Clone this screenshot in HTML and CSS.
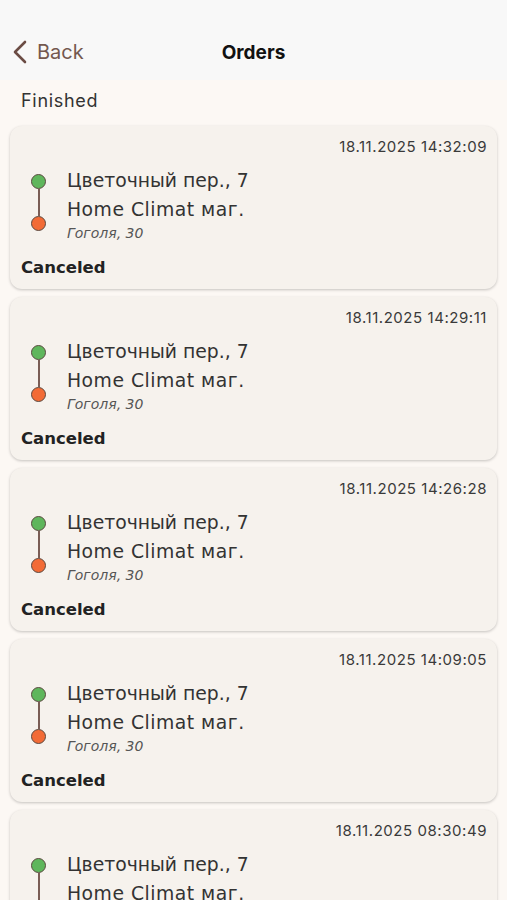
FILE: index.html
```html
<!DOCTYPE html>
<html>
<head lang="ru">
    <meta charset="UTF-8">
    <title>Orders</title>
    <link rel="stylesheet" href="styles.css">
</head>
<body>
<div class="topbar">
    <div class="back">
        <svg class="chev" width="16" height="24" viewBox="0 0 16 24"><path d="M13 2 L3 12 L13 22" fill="none" stroke="#6b4c44" stroke-width="2.6" stroke-linecap="round" stroke-linejoin="round"/></svg>
        <span>Back</span>
    </div>
    <div class="title">Orders</div>
</div>
<div class="page">
    <div class="section">Finished</div>
    <div class="list">
        <div class="card">
            <div class="time">18.11.2025 14:32:09</div>
            <div class="route">
                <div class="marks"><i class="dot from"></i><i class="stem"></i><i class="dot to"></i></div>
                <div class="addr">
                    <div class="line">Цветочный пер., 7</div>
                    <div class="line second">Home Climat маг.</div>
                    <div class="sub">Гоголя, 30</div>
                </div>
            </div>
            <div class="status">Canceled</div>
        </div>
        <div class="card">
            <div class="time">18.11.2025 14:29:11</div>
            <div class="route">
                <div class="marks"><i class="dot from"></i><i class="stem"></i><i class="dot to"></i></div>
                <div class="addr">
                    <div class="line">Цветочный пер., 7</div>
                    <div class="line second">Home Climat маг.</div>
                    <div class="sub">Гоголя, 30</div>
                </div>
            </div>
            <div class="status">Canceled</div>
        </div>
        <div class="card">
            <div class="time">18.11.2025 14:26:28</div>
            <div class="route">
                <div class="marks"><i class="dot from"></i><i class="stem"></i><i class="dot to"></i></div>
                <div class="addr">
                    <div class="line">Цветочный пер., 7</div>
                    <div class="line second">Home Climat маг.</div>
                    <div class="sub">Гоголя, 30</div>
                </div>
            </div>
            <div class="status">Canceled</div>
        </div>
        <div class="card">
            <div class="time">18.11.2025 14:09:05</div>
            <div class="route">
                <div class="marks"><i class="dot from"></i><i class="stem"></i><i class="dot to"></i></div>
                <div class="addr">
                    <div class="line">Цветочный пер., 7</div>
                    <div class="line second">Home Climat маг.</div>
                    <div class="sub">Гоголя, 30</div>
                </div>
            </div>
            <div class="status">Canceled</div>
        </div>
        <div class="card">
            <div class="time">18.11.2025 08:30:49</div>
            <div class="route">
                <div class="marks"><i class="dot from"></i><i class="stem"></i><i class="dot to"></i></div>
                <div class="addr">
                    <div class="line">Цветочный пер., 7</div>
                    <div class="line second">Home Climat маг.</div>
                    <div class="sub">Гоголя, 30</div>
                </div>
            </div>
            <div class="status">Canceled</div>
        </div>
    </div>
</div>
</body>
</html>
```

FILE: styles.css
```css
*{
    margin: 0;
    padding: 0;
    box-sizing: border-box;
}
html,body{
    height: 100%;
    overflow: hidden;
}
body{
    background: #fcf8f4;
    font-family: "Liberation Sans", Arial, sans-serif;
    color: #1d1d1d;
}
.topbar{
    height: 80px;
    background: #f8f8f8;
    display: grid;
    grid-template-columns: 1fr auto 1fr;
    align-items: center;
    padding: 24px 12px 0;
}
.back{
    display: flex;
    align-items: center;
    gap: 9px;
    color: #6b4c44;
    font-size: 20px;
}
.back span{
    font-family: Inter, "Noto Sans", sans-serif;
    color: #74584f;
}
.title{
    font-family: Inter, "Noto Sans", sans-serif;
    font-weight: 700;
    font-size: 19px;
    color: #111;
}
.section{
    font-family: Inter, "Noto Sans", sans-serif;
    font-size: 18px;
    letter-spacing: 0.7px;
    line-height: 22px;
    color: #333;
    padding: 10px 21px 0;
}
.list{
    display: flex;
    flex-direction: column;
    gap: 8px;
    padding: 14px 10px 0;
}
.card{
    height: 163px;
    background: #f6f2ed;
    border-radius: 12px;
    box-shadow: 0 1px 3px rgba(0,0,0,0.22);
    padding: 11px 10px 11px 11px;
    display: flex;
    flex-direction: column;
}
.time{
    text-align: right;
    font-family: Inter, "Noto Sans", sans-serif;
    font-size: 15px;
    line-height: 20px;
    color: #3a3a3a;
    letter-spacing: 0.55px;
}
.route{
    display: flex;
    margin-top: 12px;
}
.marks{
    display: flex;
    flex-direction: column;
    align-items: center;
    width: 15px;
    margin: 5px 21px 0 10px;
}
.dot{
    width: 15px;
    height: 15px;
    border-radius: 50%;
    border: 1.5px solid #5b4a40;
}
.dot.from{
    background: #5fb65c;
}
.dot.to{
    background: #f26b36;
}
.stem{
    width: 2px;
    height: 27px;
    background: #7a5d55;
}
.addr{
    font-family: "DejaVu Sans", sans-serif;
}
.line{
    font-size: 18.8px;
    line-height: 24px;
    color: #333;
}
.second{
    margin-top: 5px;
    letter-spacing: 0.5px;
}
.sub{
    font-size: 14px;
    line-height: 18px;
    font-style: italic;
    color: #555;
    margin-top: 2px;
}
.status{
    margin-top: auto;
    font-family: "DejaVu Sans", sans-serif;
    font-weight: 700;
    font-size: 16.5px;
    line-height: 20px;
    color: #222;
}
```
